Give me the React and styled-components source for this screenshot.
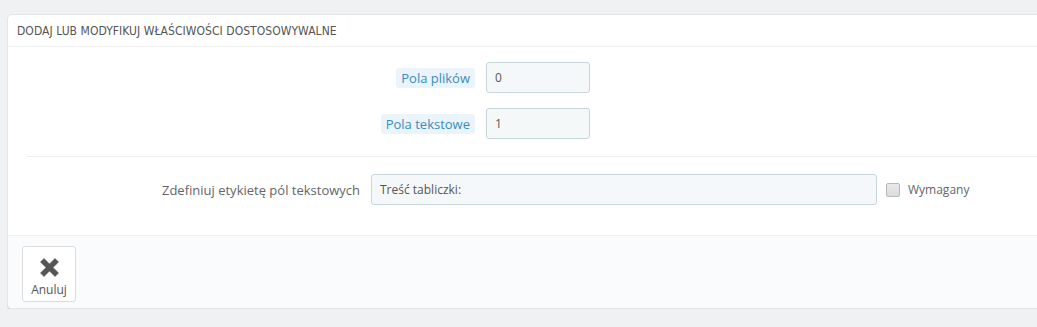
import React from 'react';
import styled, { createGlobalStyle } from 'styled-components';

const GlobalStyle = createGlobalStyle`
  html, body {
    margin: 0;
    background: #eff1f2;
    font-family: "Open Sans", "Liberation Sans", sans-serif;
    overflow: hidden;
  }
`

const Page = styled.div`
  padding: 14px 0 0 7px;
`

const Panel = styled.div`
  width: 1060px;
  background: #fff;
  border: 1px solid #e3e5e6;
  border-radius: 5px;
  box-shadow: 0 2px 0 rgba(0, 0, 0, 0.08);
`

const Heading = styled.div`
  height: 31px;
  line-height: 32px;
  padding-left: 9px;
  border-bottom: 1px solid #eeeeee;
  font-family: "DejaVu Sans Condensed", "Liberation Sans Narrow", sans-serif;
  font-size: 12px;
  letter-spacing: 0.05px;
  color: #555;
  text-transform: uppercase;
`

const Body = styled.div`
  padding: 15px 0 30px 0;
`

const FormRow = styled.div`
  display: grid;
  grid-template-columns: ${p => p.labelWidth}px auto auto 1fr;
  column-gap: 11px;
  align-items: center;
  margin-bottom: ${p => p.last ? 0 : 15}px;
`

const Label = styled.div`
  text-align: right;
  font-size: 13px;
  color: #666;
`

const TipLabel = styled.span`
  display: inline-block;
  height: 20px;
  line-height: 20px;
  padding: 0 5px;
  border-radius: 3px;
  background: #ebf4fa;
  color: #3a8cbf;
  font-size: 13px;
`

const Input = styled.input`
  box-sizing: border-box;
  width: ${p => p.w}px;
  height: 31px;
  padding: 0 8px;
  border: 1px solid #c7d6db;
  border-radius: 3px;
  background: #f5f8f9;
  font-family: "Open Sans", "Liberation Sans", sans-serif;
  font-size: 12px;
  color: #555;
  outline: none;
`

const CheckWrap = styled.label`
  display: flex;
  align-items: center;
  gap: 8px;
  margin-left: -2px;
  font-size: 12px;
  color: #666;
`

const CheckBox = styled.span`
  box-sizing: border-box;
  width: 14px;
  height: 14px;
  border: 1px solid #b9b9b9;
  border-radius: 2px;
  background: linear-gradient(#e9e9e9, #dcdcdc);
`

const Divider = styled.div`
  height: 0;
  border-top: 1px solid #eeeeee;
  margin: 17px 0 17px 19px;
`

const Footer = styled.div`
  height: 73px;
  box-sizing: border-box;
  padding: 10px 14px;
  border-top: 1px solid #eeeeee;
  background: #fafbfc;
  border-radius: 0 0 5px 5px;
`

const CancelButton = styled.button`
  box-sizing: border-box;
  width: 54px;
  height: 56px;
  display: flex;
  flex-direction: column;
  align-items: center;
  padding: 11px 0 0 0;
  background: #fff;
  border: 1px solid #dcdcdc;
  border-radius: 3px;
  font-family: "Open Sans", "Liberation Sans", sans-serif;
  font-size: 12px;
  color: #555;
`

const ButtonText = styled.span`
  margin-top: 6px;
  line-height: 14px;
`

function CrossIcon() {
  return (
    <svg width="19" height="19" viewBox="0 0 19 19">
      <path
        d="M4 0.5 L9.5 6 L15 0.5 L18.5 4 L13 9.5 L18.5 15 L15 18.5 L9.5 13 L4 18.5 L0.5 15 L6 9.5 L0.5 4 Z"
        fill="#555"
        stroke="#555"
        strokeWidth="0.6"
        strokeLinejoin="round"
      />
    </svg>
  );
}

function App() {
  return (
    <Page>
      <GlobalStyle />
      <Panel>
        <Heading>Dodaj lub modyfikuj właściwości dostosowywalne</Heading>
        <Body>
          <FormRow labelWidth={467}>
            <Label><TipLabel>Pola plików</TipLabel></Label>
            <Input w={104} defaultValue="0" readOnly />
          </FormRow>
          <FormRow labelWidth={467} last>
            <Label><TipLabel>Pola tekstowe</TipLabel></Label>
            <Input w={104} defaultValue="1" readOnly />
          </FormRow>
          <Divider />
          <FormRow labelWidth={352} last>
            <Label>Zdefiniuj etykietę pól tekstowych</Label>
            <Input w={506} defaultValue="Treść tabliczki:" readOnly />
            <CheckWrap>
              <CheckBox />
              Wymagany
            </CheckWrap>
          </FormRow>
        </Body>
        <Footer>
          <CancelButton>
            <CrossIcon />
            <ButtonText>Anuluj</ButtonText>
          </CancelButton>
        </Footer>
      </Panel>
    </Page>
  );
}

export default App;
